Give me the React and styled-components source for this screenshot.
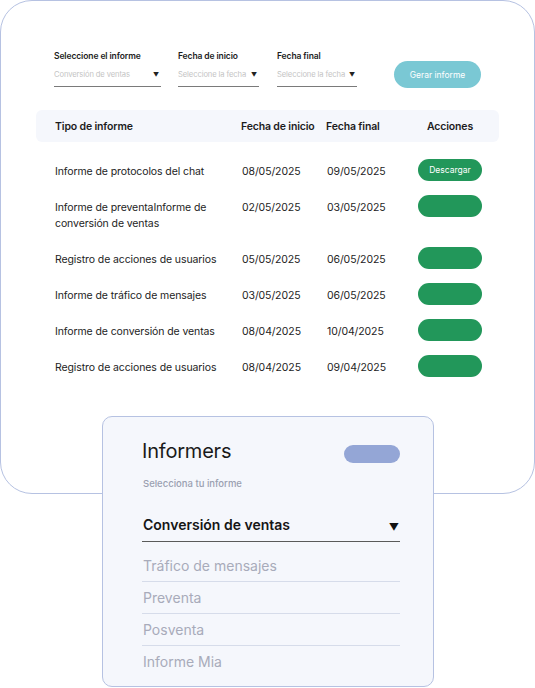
import React from "react";
import styled, { createGlobalStyle } from "styled-components";

const Global = createGlobalStyle`
  html, body { margin: 0; padding: 0; background: #fff; }
  body { font-family: Inter, "Noto Sans", sans-serif; color: #1f1f1f; }
  * { box-sizing: border-box; }
`;

const Page = styled.div`
  width: 535px;
  height: 688px;
  overflow: hidden;
`;

const Card = styled.div`
  width: 535px;
  height: 494px;
  border: 1px solid #b6c2e2;
  border-radius: 32px;
  background: #fff;
  padding: 50px 35px 0 35px;
`;

const Filters = styled.div`
  display: flex;
  align-items: flex-end;
  padding-left: 18px;
`;

const Field = styled.div`
  width: ${(p) => p.$w}px;
  margin-right: ${(p) => p.$mr}px;
  display: flex;
  flex-direction: column;
`;

const FieldLabel = styled.div`
  font-size: 8.5px;
  line-height: 11px;
  font-weight: 600;
  color: #1c1c1c;
  margin-bottom: 3px;
  letter-spacing: -0.1px;
`;

const Select = styled.div`
  display: flex;
  align-items: center;
  justify-content: space-between;
  padding: 4px 0 6px;
  border-bottom: 1px solid #7a7a7a;
  font-size: 7.6px;
  line-height: 11px;
  color: #c4c4c4;
  letter-spacing: -0.1px;
  white-space: nowrap;
`;

const SmallArrow = styled.span`
  font-size: 6px;
  color: #222;
  margin-right: 2px;
`;

const GenButton = styled.button`
  width: 87px;
  height: 27px;
  border: none;
  border-radius: 14px;
  background: #7ac8d4;
  color: #fff;
  font-family: inherit;
  font-size: 8.5px;
  margin-bottom: -1px;
  padding: 0;
`;

const cols = "186px 85px 92px 64px";

const TableHead = styled.div`
  margin-top: 23px;
  height: 32px;
  background: #f5f7fc;
  border-radius: 6px;
  display: grid;
  grid-template-columns: ${cols};
  align-items: center;
  padding: 0 17px 0 19px;
  font-size: 10.5px;
  font-weight: 600;
  color: #1c1c1c;
  letter-spacing: -0.15px;
`;

const HeadCell = styled.div`
  text-align: ${(p) => (p.$center ? "center" : "left")};
  white-space: nowrap;
`;

const Body = styled.div`
  margin-top: 12px;
`;

const Row = styled.div`
  display: grid;
  grid-template-columns: ${cols};
  align-items: start;
  padding: 0 17px 0 19px;
  font-size: 10.5px;
  line-height: 16px;
  color: #232323;
  letter-spacing: -0.1px;
`;

const Cell = styled.div`
  padding: 10px 0;
  padding-left: ${(p) => p.$pl || 0}px;
  padding-right: 6px;
`;

const ActionCell = styled.div`
  padding-top: 5px;
`;

const Download = styled.button`
  width: 64px;
  height: 22px;
  border: none;
  border-radius: 11px;
  background: #22975a;
  color: #fff;
  font-family: inherit;
  font-size: 8.5px;
  padding: 0;
  display: block;
`;

const Popup = styled.div`
  position: relative;
  z-index: 1;
  margin: -78px 0 0 102px;
  width: 332px;
  height: 271px;
  background: #f5f7fc;
  border: 1px solid #b6c2e2;
  border-radius: 10px;
  padding: 22px 33px 0 39px;
`;

const TitleRow = styled.div`
  display: flex;
  align-items: center;
  justify-content: space-between;
`;

const Title = styled.div`
  font-size: 20px;
  line-height: 24px;
  font-weight: 400;
  color: #1a1a1a;
  letter-spacing: -0.2px;
`;

const Pill = styled.div`
  width: 56px;
  height: 18px;
  border-radius: 9px;
  background: #94a6d6;
  margin-top: 6px;
`;

const Subtitle = styled.div`
  margin-top: 15px;
  font-size: 9.5px;
  line-height: 12px;
  font-weight: 500;
  color: #9aa0b1;
  padding-left: 1px;
`;

const Selected = styled.div`
  margin-top: 24px;
  display: flex;
  align-items: center;
  justify-content: space-between;
  padding: 0 1px 5px;
  border-bottom: 1px solid #5a5a5a;
  font-size: 14px;
  line-height: 18px;
  font-weight: 600;
  color: #151515;
`;

const BigArrow = styled.span`
  font-size: 10px;
  margin-top: 4px;
  color: #111;
`;

const Options = styled.div`
  margin-top: 8px;
`;

const Option = styled.div`
  padding: 7px 1px 6px;
  font-size: 14px;
  line-height: 18px;
  color: #a8abba;
  border-bottom: 1px solid ${(p) => (p.$last ? "transparent" : "#d6dcea")};
`;

const rows = [
  ["Informe de protocolos del chat", "08/05/2025", "09/05/2025", true],
  ["Informe de preventaInforme de conversión de ventas", "02/05/2025", "03/05/2025"],
  ["Registro de acciones de usuarios", "05/05/2025", "06/05/2025"],
  ["Informe de tráfico de mensajes", "03/05/2025", "06/05/2025"],
  ["Informe de conversión de ventas", "08/04/2025", "10/04/2025"],
  ["Registro de acciones de usuarios", "08/04/2025", "09/04/2025"],
];

export default function App() {
  return (
    <Page>
      <Global />
      <Card>
        <Filters>
          <Field $w={107} $mr={17}>
            <FieldLabel>Seleccione el informe</FieldLabel>
            <Select>
              Conversión de ventas <SmallArrow>▼</SmallArrow>
            </Select>
          </Field>
          <Field $w={81} $mr={18}>
            <FieldLabel>Fecha de inicio</FieldLabel>
            <Select>
              Seleccione la fecha <SmallArrow>▼</SmallArrow>
            </Select>
          </Field>
          <Field $w={80} $mr={37}>
            <FieldLabel>Fecha final</FieldLabel>
            <Select>
              Seleccione la fecha <SmallArrow>▼</SmallArrow>
            </Select>
          </Field>
          <GenButton>Gerar informe</GenButton>
        </Filters>
        <TableHead>
          <HeadCell>Tipo de informe</HeadCell>
          <HeadCell>Fecha de inicio</HeadCell>
          <HeadCell>Fecha final</HeadCell>
          <HeadCell $center>Acciones</HeadCell>
        </TableHead>
        <Body>
          {rows.map(([name, a, b, label], i) => (
            <Row key={i}>
              <Cell>{name}</Cell>
              <Cell $pl={1}>{a}</Cell>
              <Cell $pl={1}>{b}</Cell>
              <ActionCell>
                <Download>{label ? "Descargar" : ""}</Download>
              </ActionCell>
            </Row>
          ))}
        </Body>
      </Card>
      <Popup>
        <TitleRow>
          <Title>Informers</Title>
          <Pill />
        </TitleRow>
        <Subtitle>Selecciona tu informe</Subtitle>
        <Selected>
          Conversión de ventas <BigArrow>▼</BigArrow>
        </Selected>
        <Options>
          <Option>Tráfico de mensajes</Option>
          <Option>Preventa</Option>
          <Option>Posventa</Option>
          <Option $last>Informe Mia</Option>
        </Options>
      </Popup>
    </Page>
  );
}
